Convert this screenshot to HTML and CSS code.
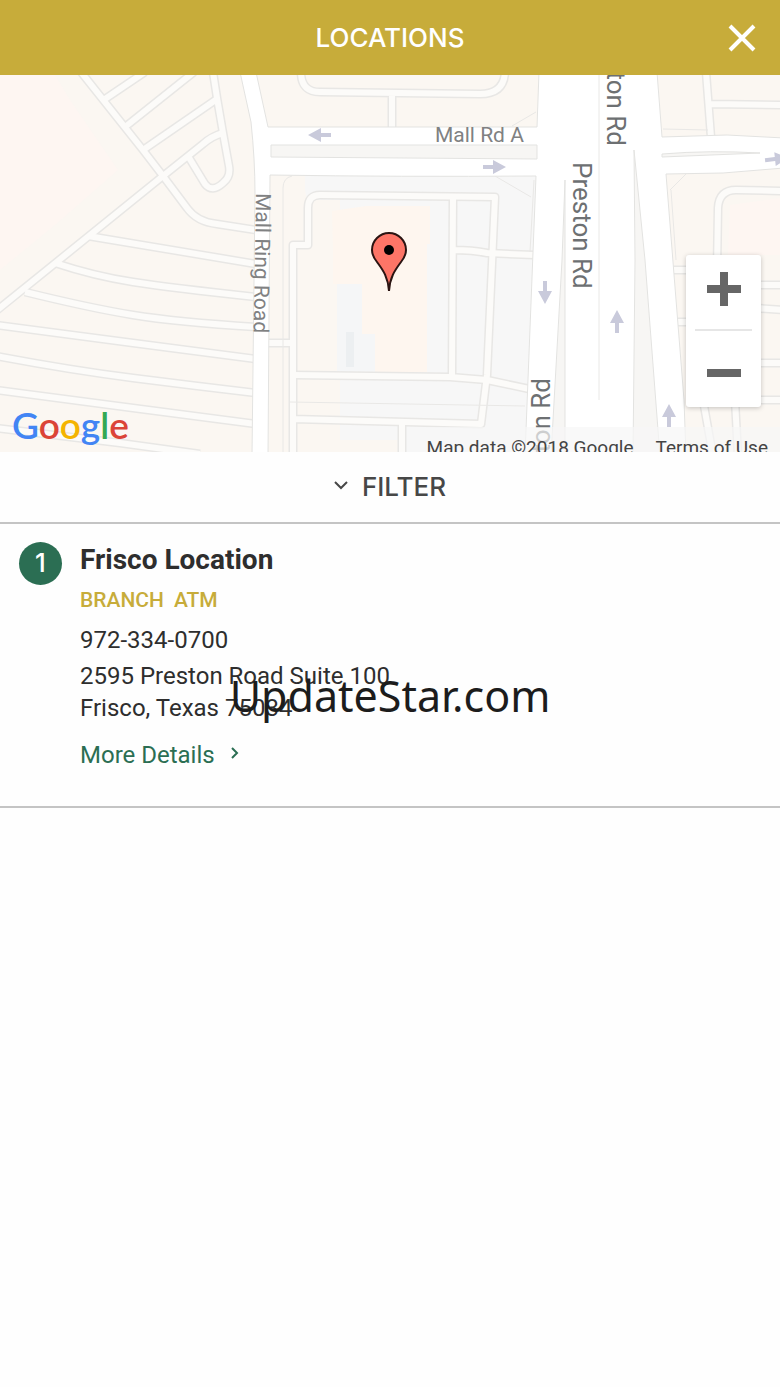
FILE: index.html
```html
<!DOCTYPE html>
<html lang="en">
<head>
<meta charset="utf-8">
<meta name="viewport" content="width=device-width, initial-scale=1">
<title>Locations</title>
<link rel="stylesheet" href="styles.css">
</head>
<body>
<header class="topbar">
  <h1 class="topbar-title">LOCATIONS</h1>
  <button class="close" type="button" aria-label="Close">
    <svg width="28" height="28" viewBox="0 0 28 28" aria-hidden="true"><path d="M2 2 26 26M26 2 2 26"/></svg>
  </button>
</header>

<main>
  <section class="map" aria-label="Map">
    <svg class="map-canvas" viewBox="0 75 780 377" preserveAspectRatio="xMidYMid slice">
      <defs>
        <g id="lanes">
          <path d="M81 72 143 150 163 176 187 208Q197 222 217 224L256 230"/>
          <path d="M-4 311 53 265 163 176 188 156 203 144Q212 136 223 133"/>
          <path d="M105 99 145 72M125 127 194 72M143 150 217 99"/>
          <path d="M213 72 217 98 223 133 229 166Q231 177 223 183 212 193 205 184L188 156"/>
          <path d="M88 236 256 264M55 263Q94 276 133 282T256 297M25 292Q90 308 133 315T256 327"/>
          <path d="M-4 325 133 343 256 359M-4 356Q70 370 133 378T256 393M-4 390 133 408 256 424M-4 428 120 443 200 454"/>
          <path d="M301 72Q301 92 320 92L480 94Q504 94 505 72M392 93V128"/>
          <path d="M293 456V245H308V208Q308 195 320 195L495 197 487 375 481 424 293 419"/>
          <path d="M453 197 452 378M453 250Q473 250 487 253L534 255M293 375 450 377 487 380 534 390M402 422V456M266 343H293"/>
          <path d="M706 72 711 137M711 104 784 105M717 270 718 208Q719 190 736 190L784 191"/>
          <path d="M672 270H690M676 322H690M755 285H784M755 308 784 310M755 363H784M755 400H784M703 400 713 456M735 400 738 456"/>
        </g>
        <path id="arrow" d="M0-12 7 1H2V11H-2V1H-7Z"/>
      </defs>

      <rect class="land" y="75" width="780" height="377"/>
      <path class="blush" d="M0 75H55L70 100 118 170 55 225 0 270Z"/>
      <path class="lot" d="M305 175H540V452H400V440H330V380H300V250H308V205L305 190Z"/>
      <path class="land" d="M300 200H340V452H300Z"/>
      <path class="building" d="M332 211 366 206H430V244H427V372H375V334H362V284H333V250Z"/>
      <path class="court" d="M337 284H362V334H375V371H337Z"/>
      <path class="annex" d="M346 332H354V367H346Z"/>
      <path class="blush" d="M730 205 780 198V255H728Z"/>

      <use href="#lanes" class="lane-edge"/>
      <use href="#lanes" class="lane"/>
      <path class="hairline" d="M283 456V188Q283 178 292 176M290 402 525 406M495 176 531 197M534 180 530 252M663 129 708 130M512 126 536 112M670 190 686 174M671 190 676 260"/>

      <path class="road" d="M240 72 251 122Q255 160 255 193L252 456H268L270 175Q400 177 536 176L525 456H686L684 400 666 174 723 173 784 168V138L727 135 662 137 657 72H539L537 127H268L256 72Z"/>
      <path class="median" d="M271 145H537V159L271 157Z"/>
      <path class="median" d="M565 180 562 260 551 456H565Z"/>
      <path class="median" d="M634 150 635 260 633 456H660L645 260Z"/>
      <path class="median" d="M662 154Q710 150 760 153L662 157Z"/>
      <path class="hairline" d="M599 75V400"/>

      <g class="arrows">
        <use href="#arrow" transform="translate(320 135) rotate(-90)"/>
        <use href="#arrow" transform="translate(494 167) rotate(90)"/>
        <use href="#arrow" transform="translate(545 292) rotate(180)"/>
        <use href="#arrow" transform="translate(617 322)"/>
        <use href="#arrow" transform="translate(669 416)"/>
        <use href="#arrow" transform="translate(776 159) rotate(84)"/>
      </g>

      <text class="street" x="435" y="142">Mall Rd A</text>
      <text class="street" transform="translate(256 193) rotate(91)">Mall Ring Road</text>
      <text class="avenue" transform="translate(573 162) rotate(90)">Preston Rd</text>
      <text class="avenue" text-anchor="end" transform="translate(607 146) rotate(90)">Preston Rd</text>
      <text class="avenue" text-anchor="end" transform="translate(550 378) rotate(-90)">Preston Rd</text>

      <g class="pin">
        <path d="M389 291C388 276 382 269 377 262 373 257 372 254 372 250A17 17 0 0 1 406 250C406 254 405 257 401 262 396 269 390 276 389 291Z"/>
        <circle cx="389" cy="250" r="5"/>
      </g>
    </svg>

    <div class="zoom">
      <button class="zoom-button zoom-in" type="button" aria-label="Zoom in">
        <svg width="34" height="34" viewBox="0 0 34 34" aria-hidden="true"><path d="M13 0H21V13H34V21H21V34H13V21H0V13H13Z"/></svg>
      </button>
      <button class="zoom-button zoom-out" type="button" aria-label="Zoom out">
        <svg width="34" height="34" viewBox="0 0 34 34" aria-hidden="true"><path d="M0 13H34V21H0Z"/></svg>
      </button>
    </div>
    <div class="brand"><span class="blue">G</span><span class="red">o</span><span class="yellow">o</span><span class="blue">g</span><span class="green">l</span><span class="red">e</span></div>
    <div class="credits"><span>Map data ©2018 Google</span><a href="#">Terms of Use</a></div>
  </section>

  <button class="filter" type="button">
    <svg width="14" height="14" viewBox="0 0 14 14" aria-hidden="true"><path d="M1 2 7 8 13 2"/></svg>
    <span>FILTER</span>
  </button>

  <ol class="results">
    <li class="result">
      <span class="badge">1</span>
      <div class="details">
        <h2 class="name">Frisco Location</h2>
        <p class="tags"><span>BRANCH</span><span>ATM</span></p>
        <a class="phone" href="tel:9723340700">972-334-0700</a>
        <address class="address">2595 Preston Road Suite 100<br>Frisco, Texas 75034</address>
        <a class="more" href="#">More Details
          <svg width="8" height="16" viewBox="0 0 8 16" aria-hidden="true"><path d="M1 1 6 6 1 11"/></svg>
        </a>
      </div>
    </li>
  </ol>
</main>
<div class="watermark">UpdateStar.com</div>
</body>
</html>
```
FILE: styles.css
```css
* { box-sizing: border-box; }

body {
  position: relative;
  min-height: 100vh;
  margin: 0;
  background: #fefefe;
  color: #2e2e2e;
  font-family: Roboto, "Liberation Sans", sans-serif;
  font-size: 24px;
  line-height: 32px;
}

button {
  padding: 0;
  border: 0;
  background: none;
  font: inherit;
  color: inherit;
  cursor: pointer;
}

a { color: inherit; text-decoration: none; }
h1, h2, p, ol { margin: 0; padding: 0; }

.topbar {
  display: grid;
  grid-template-columns: 1fr auto 1fr;
  align-items: center;
  height: 75px;
  padding: 0 24px;
  background: #c7ac3a;
  color: #fff;
}
.topbar-title {
  grid-column: 2;
  font-family: Inter, sans-serif;
  font-size: 26px;
  font-weight: 500;
}
.close { display: flex; justify-self: end; }
.close path { fill: none; stroke: #fff; stroke-width: 4; }

.map { position: relative; overflow: hidden; }
.map-canvas { display: block; width: 100%; aspect-ratio: 780 / 377; }
.land { fill: #fbf7f2; }
.blush { fill: #fef6f2; }
.lot { fill: #f7f7f7; }
.building { fill: #fef6ef; }
.court { fill: #f5f6f7; }
.annex { fill: #eceff1; }
.lane-edge { fill: none; stroke: #e8e7e5; stroke-width: 9; stroke-linejoin: round; }
.lane { fill: none; stroke: #fcfbf9; stroke-width: 6; stroke-linejoin: round; }
.hairline { fill: none; stroke: #e9e8e6; stroke-width: 1; }
.road { fill: #fff; stroke: #e3e3e1; stroke-width: 1; }
.median { fill: #f7f6f4; stroke: #e3e3e1; stroke-width: 1; }
.arrows { fill: #c9cadb; }
.street, .avenue { font-family: Roboto, sans-serif; }
.street { fill: #808182; font-size: 21px; }
.avenue { fill: #6d7072; font-size: 26px; }
.pin path { fill: #fd7567; stroke: #2b1412; stroke-width: 2; }
.pin circle { fill: #000; }

.zoom {
  position: absolute;
  right: 19px;
  bottom: 45px;
  display: flex;
  flex-direction: column;
  padding: 0 9px;
  border-radius: 3px;
  background: #fff;
  box-shadow: 0 1px 5px rgba(0, 0, 0, .22);
}
.zoom-button {
  display: flex;
  align-items: center;
  justify-content: center;
  width: 57px;
  height: 76px;
}
.zoom-in { padding-bottom: 6px; border-bottom: 2px solid #e6e6e6; }
.zoom-out { padding-top: 8px; }
.zoom path { fill: #666; }

.brand {
  position: absolute;
  left: 12px;
  bottom: 4px;
  font-family: Lato, sans-serif;
  font-size: 37px;
  font-weight: 600;
  line-height: 46px;
}
.blue { color: #4285f4; }
.red { color: #db4437; }
.yellow { color: #f4b400; }
.green { color: #34a853; }

.credits {
  position: absolute;
  right: 0;
  bottom: -9px;
  display: flex;
  gap: 22px;
  height: 34px;
  padding: 0 12px;
  background: rgba(246, 246, 246, .7);
  color: #444;
  font-size: 19px;
  line-height: 42px;
}

.filter {
  display: flex;
  align-items: center;
  justify-content: center;
  gap: 14px;
  width: 100%;
  height: 72px;
  border-bottom: 2px solid #c4c4c4;
  color: #474747;
  font-family: Inter, sans-serif;
  font-size: 26px;
  font-weight: 500;
}
.filter path { fill: none; stroke: #474747; stroke-width: 2; }

.results { list-style: none; }
.result {
  display: flex;
  gap: 18px;
  padding: 18px 19px 35px;
  border-bottom: 2px solid #c4c4c4;
}
.badge {
  flex: none;
  width: 43px;
  height: 43px;
  border-radius: 50%;
  background: #2b6e53;
  color: #fff;
  font-family: Inter, sans-serif;
  font-size: 26px;
  font-weight: 500;
  line-height: 42px;
  text-align: center;
}
.details { display: flex; flex-direction: column; align-items: flex-start; }
.name { font-size: 28px; font-weight: 700; line-height: 36px; }
.tags {
  display: flex;
  gap: 10px;
  margin: 8px 0 10px;
  color: #c7ac3a;
  font-size: 21px;
  font-weight: 500;
  line-height: 28px;
}
.address { margin: 4px 0 15px; font-style: normal; }
.more { display: flex; align-items: center; gap: 16px; color: #2b6e53; }
.more path { fill: none; stroke: #2b6e53; stroke-width: 2; }

.watermark {
  position: absolute;
  inset: 0;
  display: flex;
  align-items: center;
  justify-content: center;
  padding-top: 4px;
  color: #1c1c1c;
  font-family: "Noto Sans", sans-serif;
  font-size: 43px;
  pointer-events: none;
}
```
